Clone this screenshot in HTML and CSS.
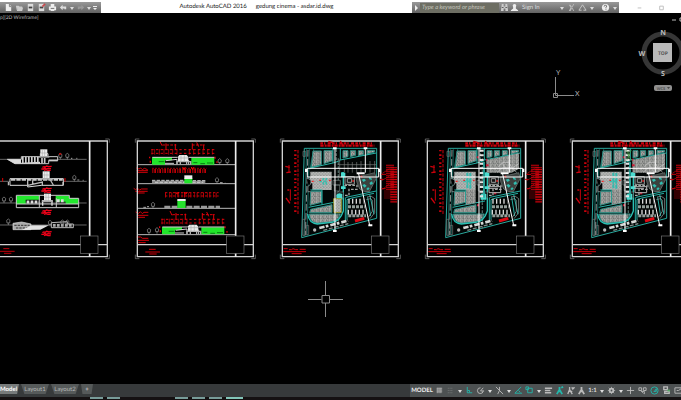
FILE: index.html
```html
<!DOCTYPE html>
<html lang="en">
<head>
<meta charset="utf-8">
<title>Autodesk AutoCAD 2016 - gedung cinema - asdar.id.dwg</title>
<link rel="stylesheet" href="styles.css">
</head>
<body>
<svg class="defs" aria-hidden="true">
  <defs>
    <pattern id="stipple" width="13" height="11" patternUnits="userSpaceOnUse"><rect width="13" height="11" fill="#949694"/><path d="M1 1h2v2h3M8 1l3 3M2 7l3 2M9 7h3v2" stroke="#3c403e" stroke-width="1.5" fill="none"/><path d="M5 1l1 1M1 5h2M7 5h2v2M11 1v1M6 9h2" stroke="#deddda" stroke-width="2" fill="none"/></pattern>
    <pattern id="paving" width="9" height="9" patternUnits="userSpaceOnUse"><rect width="9" height="9" fill="#b6b8b6"/><path d="M0 2h5M6 6h3M2 7h2" stroke="#7c807d" stroke-width="2"/></pattern>

    <g id="frame">
      <path d="M22 33H370V380H22ZM22 344H370" fill="none" stroke="#d2d2d2" stroke-width="4"/>
      <path d="M317 33V380" stroke="#eee" stroke-width="5"/>
      <rect x="290" y="318" width="52" height="52" fill="#000" stroke="#777" stroke-width="2"/>
      <path d="M16 38V27H28M364 27H376V38M16 374V386H28M364 386H376V374" fill="none" stroke="#888" stroke-width="2"/>
    </g>

    <g id="tree" fill="none" stroke="#999" stroke-width="2"><path d="M0 0V-7M-4-6Q-8-16 0-18Q8-16 4-6Z"/></g>

    <g id="tower"><path d="M-10 0V-23H11V0Z" fill="#eee"/><path d="M-4-22V0M3-22V0M-10-12H11" stroke="#999" stroke-width="1.5"/><path d="M-17 2V-3H17V2Z" fill="#aaa"/></g>

    <g id="caption" stroke="#f00018" stroke-width="4" fill="none"><path d="M-14-3l5-2 4 1 4-3 6 2 9-1M-17 2h7l3-3 5 3 5-2 9 1M-9 6l6-2 6 2h8"/></g>

    <g id="dims" fill="none" stroke="#cc000b">
      <path d="M136 40H298" stroke-width="7" stroke-dasharray="8 3 4 7 9 4"/>
      <path d="M136 47H298" stroke-width="7" stroke-dasharray="10 3 6 2"/>
      <path d="M160 34l14 4M196 33l8 12" stroke-width="4"/>
      <path d="M61 60V252" stroke-width="7" stroke-dasharray="4 9 5 6"/>
      <path d="M69 60V252" stroke-width="3" stroke-dasharray="10 4"/>
      <path d="M42 105V128M46 178V212" stroke-width="3"/>
      <path d="M31 109l13 3M34 128l13-2M37 180h6M33 204l12 16" stroke-width="4"/>
      <path d="M319 133h14M315 148h10M320 176h12" stroke-width="3"/>
      <path d="M322 130l22-14M321 151l22-12M323 178l20-16" stroke-width="2"/>
      <path d="M345 104V182" stroke-width="24" stroke-dasharray="3 3"/>
      <path d="M356 112V218" stroke-width="20" stroke-dasharray="3 2"/>
      <path d="M338 182V207" stroke-width="22" stroke-dasharray="2 4"/>
      <path d="M26 356h12M42 359h8l4-3 8 3h7M74 358h18M25 365h68M50 371h30" stroke-width="3"/>
    </g>

    <g id="site">
      <path d="M88 55H305V265L80 323Z" fill="#020706" stroke="#2aa99e" stroke-width="3"/>
      <path d="M95 58L87 318M103 58L96 317M116 58L105 118" fill="none" stroke="#229a90" stroke-width="2"/>
      <path d="M99 60L91 316" stroke="#8a8f8e" stroke-width="3" stroke-dasharray="20 7"/>
      <path d="M84 64h8v15h-8zM83 268h7v48h-7zM94 286h7v28h-7z" fill="none" stroke="#777" stroke-width="2"/>
      <g fill="url(#stipple)" stroke="#2a8c82" stroke-width="3">
        <path d="M114 63H139V104L109 112Z"/><path d="M147 62H172V92L147 101Z"/>
        <path d="M204 62H219V80L204 84ZM226 62H242V76L226 80ZM250 62H265V74L250 77ZM276 61H299V66L276 73Z"/>
        <path d="M107 184H140V217L105 226Z"/><path d="M107 238L171 224V248H104Z"/>
        <path d="M103 252H196Q189 274 169 276L126 280Q104 277 103 252Z"/>
      </g>
      <path d="M106 125H170V180H112V160H104V142H106Z" fill="url(#paving)"/>
      <path d="M106 114L174 99V55M196 55V90L304 69M174 99L196 92M106 180H141V224M101 232L198 213" fill="none" stroke="#28b3a6" stroke-width="3"/>
      <path d="M184 58V90M190 85V300" stroke="#4b6661" stroke-width="4" stroke-dasharray="8 4"/>
      <path d="M199 128H205V243Q195 275 170 277L127 282Q102 280 98 252" fill="none" stroke="#2bc2b5" stroke-width="4"/>
      <path d="M174 151h22v14h-22zM178 165h16v18h-16zM186 186h19v18h-19z" fill="#070c0b" stroke="#748481" stroke-width="2"/>
      <path d="M210 140H238V163H210ZM217 146H230V157H217Z" fill="#111" stroke="#9a9e9c" stroke-width="3"/>
      <path d="M184 195q5-9 18-3v17h-17zM198 128h13v14h-13zM198 169h14v8h-14z" fill="#4adbcf"/>
      <path d="M208 166H246V178H222V196H209" fill="none" stroke="#a5a9a7" stroke-width="4" stroke-dasharray="8 4"/>
      <path d="M243 142L299 128L304 145L283 185Q267 188 254 177L246 158Z" fill="#3b403e" stroke="#777f7d" stroke-width="2"/>
      <path d="M260 149l8-3 5 5-7 5zM281 141l8 2 2 7-8-2zM262 166l6-4 7 5-6 6zM283 159l8-5 3 7-7 4zM274 177l5-5 5 3-5 6z" fill="#30bdb0"/>
      <path d="M213 202L304 183M211 276V202M216 269V209L231 204M231 204L297 190M284 193L297 253M278 202L287 258" fill="none" stroke="#26ada2" stroke-width="3"/>
      <path d="M220 214h45M218 247h51" stroke="#dadada" stroke-width="15" stroke-dasharray="4 7"/>
      <path d="M219 230h50M220 257h53" stroke="#929d99" stroke-width="9" stroke-dasharray="9 3"/>
      <path d="M276 201L289 199L299 206V248L285 266M274 209L286 206L292 211V244L280 262" fill="none" stroke="#a3a6a4" stroke-width="2"/>
      <path d="M240 273L268 265" stroke="#e00812" stroke-width="9"/>
      <path d="M133 294L219 272" stroke="#d4d7d5" stroke-width="8" stroke-dasharray="16 4 8 6"/>
      <path d="M145 301L220 281" stroke="#81908c" stroke-width="4" stroke-dasharray="12 5"/>
      <circle cx="119" cy="300" r="5" fill="#bbb"/><path d="M133 154h22M145 143v27M154 143v26" stroke="#3bbdad" stroke-width="5" stroke-dasharray="8 5"/>
      <path d="M110 154h6M133 151h5M162 151h5M257 137l5 5M232 153h5" stroke="#f12626" stroke-width="4"/>
      <path d="M95 146q13 0 13 10t-9 13v16h8" fill="#000" stroke="#9aa" stroke-width="2"/>
    </g>
    <g id="sections" fill="none" stroke="#fff" stroke-width="3">
      <path d="M97 115H311V141H97ZM180 55V305M271 55V128M251 132L284 286"/>
      <path d="M174 55h11M266 55h11M174 303h11M280 286h12M93 116v10M313 116v10M245 130h24" stroke-width="6"/>
    </g>
    <g id="dense">
      <path d="M202 90L300 70V116L278 128H203Z" fill="url(#stipple)"/>
      <path d="M141 179H170V219L141 224Z" fill="url(#stipple)"/>
      <path d="M238 111l13-14h17l12 17 18-12M235 127l15-14h28l15 14M249 98l17 28" fill="none" stroke="#c8c8c8" stroke-width="2"/>
      <path d="M145 128V180M154 129V180" stroke="#35b9ae" stroke-width="6" stroke-dasharray="11 7"/>
      <path d="M188 59V96M188 98V205" stroke="#e5e5e5" stroke-width="12" stroke-dasharray="6 8"/>
      <path d="M195 95V203" stroke="#28ada2" stroke-width="5"/>
      <path d="M173 82h6M201 106h8M225 190h7M174 226h6M201 89h4" stroke="#c51e37" stroke-width="6"/>
      <path d="M207 170H245V188H210V175H237" fill="none" stroke="#b9b9b9" stroke-width="3"/>
    </g>

    <g id="wing">
      <path d="M66 82H126V91H105V104H66ZM184 83H253V104H184Z" fill="#21e62a"/>
      <path d="M67 82H143M176 82H253M107 92L141 88V103M176 90V103M105 100H132" fill="none" stroke="#d5d5d5" stroke-width="3"/>
      <path d="M86 95h17M190 98h12M211 101h14M231 99h18" stroke="#087c12" stroke-width="3"/>
      <path d="M144 80l4-5h22l5 6v14h-31z" fill="#e9e9e9"/><path d="M153 76v19M163 76v19M144 84h31" stroke="#aaa" stroke-width="2"/>
      <path d="M141 103v-8h41v8M151 103v-7M170 103v-7" fill="none" stroke="#b1b1b1" stroke-width="4"/>
    </g>
    <g id="wingdims" fill="none" stroke="#e0000a">
      <path d="M66 57V74M74 57V74M88 57V74M102 57V74M116 57V74M128 57V74M141 57V74M178 57V74M191 57V74M205 57V74M219 57V74M233 57V74M247 57V74" stroke-width="2"/>
      <path d="M64 59H254M64 70H254" stroke-width="3" stroke-dasharray="7 7"/>
      <path d="M97 45H139M186 45H224" stroke-width="3" stroke-dasharray="8 4"/><path d="M108 40V59M136 42V59M187 40V59M221 43V59M90 34l6 13M200 37l6 13" stroke-width="3"/>
      <path d="M59 80v5M61 92v6M255 80v6M261 94v5" stroke-width="4"/>
    </g>

    <symbol id="i-down" viewBox="0 0 8 8"><path d="M2 3h4L4 6z" fill="currentColor"/></symbol>
    <symbol id="i-user" viewBox="0 0 10 10"><circle cx="5" cy="3" r="2"/><path d="M3.5 4h3v2L9 8v1H1V8l2.500-2z"/></symbol>
  </defs>
</svg>

<header class="titlebar">
  <div class="quick" role="toolbar" aria-label="Quick access">
    <button aria-label="New"><svg viewBox="0 0 10 10"><path d="M2 1h4l2 3v5H2z" fill="#eee"/><path d="M6 1v3h2" fill="none" stroke="#777"/></svg></button>
    <button aria-label="Open"><svg viewBox="0 0 10 10"><path d="M1 3h3l1 1h3v1H3L2 8zM3 5h6L8 9H2z" fill="#ccc"/></svg></button>
    <button aria-label="Save"><svg viewBox="0 0 10 10"><path d="M2 1h6v8H2z" fill="#ddd"/><path d="M3 4h4v2H3z" fill="#444"/></svg></button>
    <button aria-label="Save as"><svg viewBox="0 0 10 10"><path d="M2 1h6v8H2z" fill="#ddd"/><path d="M3 4h4v2H3z" fill="#444"/><path d="M6 4l3-3" stroke="#c6494d" stroke-width="2"/></svg></button>
    <button aria-label="Plot"><svg viewBox="0 0 10 10"><path d="M3 1h4v3h2v4H7v1H3V8H1V4h2z" fill="#eee"/><path d="M3 6h4" stroke="#666"/></svg></button>
    <button aria-label="Undo"><svg viewBox="0 0 10 10"><path d="M1 5l3-3v2h4v3H6V6H4v2z" fill="#ddd"/></svg></button>
    <button class="drop" aria-label="Undo list"><svg><use href="#i-down"/></svg></button>
    <button aria-label="Redo"><svg viewBox="0 0 10 10"><path d="M9 5L6 2v2H2v3h2V6h2v2z" fill="#999"/></svg></button>
    <button class="drop" aria-label="Redo list"><svg><use href="#i-down"/></svg></button>
    <button class="drop" aria-label="Customize"><svg viewBox="0 0 8 8"><path d="M2 2h4v1H2zM2 4h4L4 6z" fill="#eee"/></svg></button>
  </div>
  <h1 class="title"><span>Autodesk AutoCAD 2016</span><span>gedung cinema - asdar.id.dwg</span></h1>
  <div class="info" role="toolbar" aria-label="Help and account">
    <button class="drop" aria-label="Collapse search"><svg viewBox="0 0 8 8"><path d="M3 1l3 3-3 3z" fill="#eee"/></svg></button>
    <input type="search" aria-label="Search help" placeholder="Type a keyword or phrase">
    <button aria-label="Search"><svg viewBox="0 0 10 10"><path d="M2 1h2v3h2V1h2l1 8H6V6H4v3H1z" fill="#ccc"/><path d="M2 5h2M6 5h2" stroke="#555"/></svg></button>
    <button class="signin"><svg fill="#eee"><use href="#i-user"/></svg><span>Sign In</span></button>
    <button class="drop" aria-label="Account list"><svg><use href="#i-down"/></svg></button>
    <button aria-label="Exchange"><svg viewBox="0 0 10 10"><path d="M2 2h2l2 3-2 4H2l2-4zM8 1H7L5 5l2 4h1L6 5z" fill="#bbb"/></svg></button>
    <button aria-label="Autodesk 360"><svg viewBox="0 0 10 10"><path d="M5 2L1 8h3M5 2l4 6H6" fill="none" stroke="#ccc"/></svg></button>
    <button class="drop" aria-label="Autodesk 360 list"><svg><use href="#i-down"/></svg></button>
    <button class="help" aria-label="Help"><svg viewBox="0 0 10 10"><circle cx="5" cy="5" r="4" fill="#eee"/><path d="M3.500 4q0-2 2-1.500t0 2.500v1M5.500 7v1" fill="none" stroke="#666"/></svg></button>
    <button class="drop" aria-label="Help list"><svg><use href="#i-down"/></svg></button>
  </div>
  <div class="window">
    <button aria-label="Minimize"><svg viewBox="0 0 10 10"><path d="M3 5.500h4" stroke="#bbb"/></svg></button>
    <button aria-label="Restore"><svg viewBox="0 0 10 10"><path d="M3 3.500h4v4H3z" fill="none" stroke="#bbb"/></svg></button>
  </div>
</header>

<main class="model">
  <svg class="drawing" role="img" aria-label="Cinema building sheets: elevations, sections and site plans">
    <g transform="translate(-16 117) scale(.3333)"><use href="#frame"/></g>
    <g transform="translate(0 117) scale(.3333)">
      <path d="M0 88H260M0 154H260M0 219H260M0 285H260" stroke="#999" stroke-width="2"/>
      <path d="M22 88H64V80H121V71H144V80H173V92H146V101H45Z" fill="#000" stroke="#ccc" stroke-width="3"/><path d="M22 88H63V98L120 95V101H44Z" fill="#ddd"/>
      <path d="M66 86H119M66 94H119" stroke="#d0d0d0" stroke-width="11" stroke-dasharray="5 4"/>
      <use href="#tower" x="131" y="81"/><path d="M126 84v16M134 84v16M146 91h27" stroke="#ccc" stroke-width="5"/>
      <use href="#tree" x="181" y="88"/><use href="#tree" x="202" y="88"/><path d="M213 85h4M229 85h3" stroke="#aaa" stroke-width="3"/><path d="M177 72h7" stroke="#d00" stroke-width="4"/>
      <use href="#caption" x="141" y="115"/>
      <path d="M30 146H190V166H125L83 171V166H30Z" fill="#000" stroke="#ddd" stroke-width="3"/><path d="M33 149H188" stroke="#ccc" stroke-width="6" stroke-dasharray="13 3"/><path d="M83 150V166L127 156V168M98 151V162M151 150L160 165" fill="none" stroke="#bbb" stroke-width="4"/>
      <use href="#tower" x="138" y="147"/><use href="#tree" x="223" y="154"/><path d="M25 156v10M189 156v10" stroke="#ddd" stroke-width="3"/><path d="M8 144v11M195 144v11" stroke="#d00" stroke-width="3"/><path d="M232 150h6M248 151h3" stroke="#999" stroke-width="3"/>
      <use href="#caption" x="141" y="181"/>
      <path d="M48 197H118V209H77V222H48ZM167 197H207V204H235V222H197V215H167Z" fill="#23e72e"/><path d="M49 196H208V205H236V233H49ZM49 222H236M118 196V232M169 205V232" fill="none" stroke="#ccc" stroke-width="3"/>
      <path d="M80 216h37M171 212h24" stroke="#ddd" stroke-width="9" stroke-dasharray="8 4"/><path d="M128 227v-15h28v15" fill="none" stroke="#ddd" stroke-width="4"/><use href="#tower" x="142" y="214"/>
      <use href="#tree" x="12" y="219"/><use href="#tree" x="33" y="219"/><use href="#caption" x="141" y="247"/>
      <path d="M39 280L65 276 93 282V299H39Z" fill="#aaa" stroke="#ddd" stroke-width="2"/><path d="M43 286h46M48 294h36" stroke="#333" stroke-width="3" stroke-dasharray="7 3"/><path d="M65 300L95 286H147L121 299Z" fill="#e2e2e2"/>
      <path d="M154 278L202 275 202 282H220V293H154Z" fill="#111" stroke="#bbb" stroke-width="3"/><path d="M159 286H218" stroke="#aaa" stroke-width="8" stroke-dasharray="8 4"/>
      <use href="#tree" x="25" y="285"/><use href="#tree" x="150" y="289"/><use href="#tree" x="187" y="288"/><use href="#tree" x="202" y="288"/><use href="#caption" x="141" y="311"/>
      <path d="M10 356h18M0 364h44M12 370h22" stroke="#c00009" stroke-width="3"/>
    </g>
    <g transform="translate(130 117) scale(.3333)">
      <path d="M22 104H315M22 161H315M22 235H315M22 314H315" stroke="#bbb" stroke-width="3"/>
      <use href="#wingdims"/><use href="#wing"/><use href="#tree" x="269" y="104"/><use href="#tree" x="292" y="104"/>
      <path d="M67 115H230" stroke="#e00008" stroke-width="3" stroke-dasharray="4 5"/><path d="M67 123H230" stroke="#c00007" stroke-width="12" stroke-dasharray="3 3 5 4"/><path d="M158 111l4 8 4-8M184 111l4 8 4-8" fill="none" stroke="#f00" stroke-width="3"/>
      <path d="M66 152H226V160H66Z" fill="#888"/><path d="M66 151H163M188 152H226M75 157H220" stroke="#ccc" stroke-width="3" stroke-dasharray="10 4"/><path d="M163 144H187V160H163Z" fill="#23e42c"/><path d="M163 136H187V147H163Z" fill="#eee"/><use href="#tree" x="261" y="161"/><path d="M270 158h8M284 160h3" stroke="#aaa" stroke-width="3"/>
      <path d="M105 188H266M105 198H266" stroke="#d00008" stroke-width="3" stroke-dasharray="7 5"/><path d="M105 195H266" stroke="#b80007" stroke-width="15" stroke-dasharray="3 9 2 5"/><path d="M137 186l5 7 5-7M162 186l5 7 5-7" fill="none" stroke="#f00" stroke-width="3"/>
      <path d="M103 231H270" stroke="#999" stroke-width="8" stroke-dasharray="18 4"/><path d="M142 211H167V234H142Z" fill="#26e22d"/><path d="M142 207H167V213H142Z" fill="#eee"/><use href="#tree" x="69" y="235"/><path d="M40 232h8M51 230h6" stroke="#aaa" stroke-width="3"/>
      <g transform="translate(30 209)"><use href="#wingdims"/><use href="#wing"/></g><use href="#tree" x="57" y="313"/><use href="#tree" x="81" y="311"/>
      <g fill="none" stroke="#d40009" stroke-width="3"><path d="M19 114l8 3 5-3 5 5 6-4 10 4M20 122h34M22 127h31M11 175l6 4 5-4 7 5 5-3h19M16 184h37M22 189h22M17 246l9 4 5-5 6 6 5-4h13M21 256h34M25 262h20M20 321h12l5 4h18M22 331h35M25 338h22M57 358h20M46 366h44M58 372h22"/></g>
      <use href="#frame"/>
    </g>
    <g transform="translate(275 117) scale(.3333)">
      <use href="#frame"/><use href="#site"/><path d="M188 104H304M194 88V139M208 88V128M219 96V128M232 96V128M245 96V128M258 93V128M285 93V128M299 93V128" fill="none" stroke="#7a7d7b" stroke-width="2"/><path d="M176 206H199V248H177Z" fill="url(#paving)" stroke="#9a982b" stroke-width="3"/><use href="#sections"/><use href="#dims"/>
    </g>
    <g transform="translate(420 117) scale(.3333)"><use href="#frame"/><g transform="translate(-3 0)"><use href="#site"/><use href="#dense"/><use href="#sections"/></g><use href="#dims"/></g>
    <g transform="translate(565 117) scale(.3333)"><use href="#frame"/><use href="#site"/><use href="#dense"/><path d="M183 60l15 31M199 60l-14 31M190 63v22" stroke="#48a34b" stroke-width="2"/><use href="#sections"/><use href="#dims"/></g>

    <g class="ucs"><path d="M555.500 64V82.500H574M553.500 80.500h4v4h-4z"/><text x="556" y="62">Y</text><text x="575" y="83">X</text></g>
    <path class="cursor" d="M325.500 268V282M325.500 290V304M308 286.500H321.500M329.500 286.500H343M322 282.500H329.500V290H322Z"/>
  </svg>
  <p class="viewlabel">p][2D Wireframe]</p>
  <svg class="cube" viewBox="0 0 48 84" role="img" aria-label="View cube, top">
    <circle cx="30" cy="40" r="19" fill="none" stroke="#363636" stroke-width="5"/>
    <rect class="face" x="20" y="30" width="19" height="19"/>
    <text x="30" y="22">N</text><text x="30" y="63">S</text><text x="9" y="43">W</text><text class="top" x="30" y="42">TOP</text>
    <rect class="pill" x="21" y="72" width="18" height="6" rx="2"/><text class="wcs" x="28" y="77">WCS</text><path d="M34 74h3l-1.500 2z" fill="#444"/>
    <path d="M39 7h4M47 5h3v3h-3z" fill="none" stroke="#bbb"/>
  </svg>
</main>

<footer class="status">
  <nav class="tabs" aria-label="Layouts">
    <button class="tab active"><span>Model</span></button>
    <button class="tab"><span>Layout1</span></button>
    <button class="tab"><span>Layout2</span></button>
    <button class="tab add" aria-label="New layout"><span>+</span></button>
  </nav>
  <div class="tools" role="toolbar" aria-label="Drafting settings">
    <button class="space">MODEL</button>
    <button aria-label="Grid"><svg viewBox="0 0 10 10"><path d="M2 2.500h6M2 4.500h6M2 6.500h6M2.500 2v6M4.500 2v6M6.500 2v6" stroke="#aaa"/></svg></button>
    <button aria-label="Snap"><svg viewBox="0 0 10 10"><path d="M2 2.500h6M2 5h6M2 7.500h6" stroke="#7b7e7e" stroke-dasharray="1 1"/></svg></button>
    <button class="drop" aria-label="Snap list"><svg><use href="#i-down"/></svg></button>
    <button class="on" aria-label="Ortho"><svg viewBox="0 0 10 10"><path d="M2.500 1v6.500H8M3 5h2v2"/></svg></button>
    <button aria-label="Polar"><svg viewBox="0 0 10 10"><path d="M8 5.500A3.200 3.200 0 1 1 5 2M5 5.500h4M5 5.500L8 2"/></svg></button>
    <button class="drop" aria-label="Polar list"><svg><use href="#i-down"/></svg></button>
    <button aria-label="Isodraft"><svg viewBox="0 0 10 10"><path d="M1 1l8 8M5 5V1M5 5L3 9"/></svg></button>
    <button class="drop" aria-label="Isodraft list"><svg><use href="#i-down"/></svg></button>
    <button class="on" aria-label="Object tracking"><svg viewBox="0 0 10 10"><path d="M8 1L1 8h8M5 5l2 2"/></svg></button>
    <button class="on" aria-label="Object snap"><svg viewBox="0 0 10 10"><path d="M3 2.500h5v5H3z"/><path d="M1 1h3v3H1z"/></svg></button>
    <button class="drop" aria-label="Object snap list"><svg><use href="#i-down"/></svg></button>
    <button aria-label="Lineweight"><svg viewBox="0 0 10 10"><path d="M1 2.500h8M1 5h6M1 7.500h7" stroke-width="1.500"/></svg></button>
    <button class="on" aria-label="Annotation visibility"><svg viewBox="0 0 10 10"><path d="M5 1v3L2 9M5 4l3 5M3 6h4M7 2l2-1" stroke-width="2"/></svg></button>
    <button aria-label="Autoscale"><svg viewBox="0 0 10 10"><path d="M4 1v3L2 9M4 4l3 5M3 6h4M6 2h3L7 4" stroke-width="1.500"/></svg></button>
    <button aria-label="Annotation scale"><svg viewBox="0 0 10 10"><path d="M5 1v3L2 9M5 4l3 5M3 6h4" stroke-width="2"/></svg></button>
    <button class="scale">1:1</button>
    <button class="drop" aria-label="Scale list"><svg><use href="#i-down"/></svg></button>
    <button aria-label="Workspace"><svg viewBox="0 0 10 10"><circle cx="5" cy="5" r="2" stroke-width="2"/><path d="M5 1v1M5 8v1M1 5h1M8 5h1M2 2l1 1M7 7l1 1M8 2L7 3M3 7L2 8"/></svg></button>
    <button class="drop" aria-label="Workspace list"><svg><use href="#i-down"/></svg></button>
    <button aria-label="Annotation monitor"><svg viewBox="0 0 10 10"><path d="M5 1v8M1 5h8"/></svg></button>
    <button class="wide" aria-label="Isolate objects"><svg viewBox="0 0 10 10"><path d="M1 2h3v3H1zM6 2h3v3H6zM4 6h3v3M3 5l3 3"/></svg></button>
    <button class="wide on" aria-label="Hardware acceleration"><svg viewBox="0 0 10 10"><circle cx="5" cy="5" r="4"/><path d="M4 6h3V3L5 6"/></svg></button>
    <button class="wide" aria-label="Clean screen"><svg viewBox="0 0 10 10"><path d="M2 1h4v3H2zM3 6h5v2H3z" stroke-width="1.500"/><path d="M6 4h3v2H6z" fill="#59a568" stroke="none"/></svg></button>
    <button class="wide" aria-label="Customization"><svg viewBox="0 0 10 10"><path d="M1 2h8v6H1zM3 5h2M5 5l3-2"/></svg></button>
  </div>
</footer>
<div class="taskbar"><i></i><i></i><i class="far"></i><i></i><i></i><i class="current"></i></div>
</body>
</html>
```
FILE: styles.css
```css
* { box-sizing: border-box; }
body {
  margin: 0;
  height: 100vh;
  display: grid;
  grid-template-rows: 13px minmax(0, 1fr) 13px 3px;
  grid-template-columns: minmax(0, 1fr);
  overflow: hidden;
  background: #000;
  font-family: Lato, "Open Sans", sans-serif;
  text-rendering: geometricPrecision;
}
.defs { position: absolute; width: 0; height: 0; }
button {
  flex: none;
  display: flex;
  align-items: center;
  justify-content: center;
  width: 11px;
  height: 11px;
  padding: 0;
  border: 0;
  background: none;
  color: #ddd;
  font: inherit;
  text-rendering: inherit;
}
button svg { display: block; flex: none; width: 9px; height: 9px; }
button.drop { width: 8px; }
button.drop svg { width: 8px; height: 8px; }

.titlebar {
  display: grid;
  grid-template-columns: 101px minmax(0, 1fr) 207px 62px;
  align-items: end;
  background: #fff;
}
.quick, .info {
  display: flex;
  align-items: center;
  height: 11px;
  background: linear-gradient(#999, #626262);
}
.quick { padding-left: 3px; }
.quick button.drop { width: 6px; }
.title {
  display: flex;
  justify-content: center;
  gap: 9px;
  margin: 0;
  font-size: 6px;
  font-weight: 400;
  line-height: 13px;
  color: #222;
  white-space: nowrap;
}
.info input {
  width: 82px;
  height: 10px;
  padding: 0 2px;
  border: 0;
  background: #6d6e63;
  font: italic 6px Lato, sans-serif;
  text-rendering: inherit;
  color: #ddd;
}
.info input::placeholder { color: #c4c4bc; opacity: 1; }
.info .signin { width: 48px; gap: 3px; justify-content: flex-start; font-size: 6px; }
.info .help { margin-left: 4px; }
.window { display: flex; gap: 11px; padding-left: 15px; }

.model { position: relative; overflow: hidden; background: #000; }
.drawing { display: block; width: 100%; height: 100%; }
.ucs path, .cursor { fill: none; stroke: #8b8b8b; }
.ucs text { fill: #aaa; font-size: 7px; }
.viewlabel {
  position: absolute;
  top: 1px;
  left: 0;
  margin: 0;
  font-size: 5px;
  line-height: 9px;
  color: #bbb;
}
.cube { position: absolute; top: 0; right: 0; width: 48px; height: 84px; fill: #000; }
.cube text { fill: #bbb; font: 700 7px "Noto Sans", sans-serif; text-anchor: middle; }
.cube text.top { fill: #555; font-size: 5px; }
.cube text.wcs { fill: #555; font-size: 4px; }
.cube .face { fill: #b9b9b9; }
.cube .pill { fill: #909090; }

.status {
  display: flex;
  justify-content: space-between;
  overflow: hidden;
  background: #373a3b;
}
.tabs { display: flex; height: 10px; gap: 2px; }
.tab {
  width: 28px;
  height: 10px;
  background: #565a5a;
  color: #b4b6b6;
  font-size: 6px;
  clip-path: polygon(0 0, 100% 0, 88% 100%, 12% 100%);
}
.tab.active {
  width: 19px;
  justify-content: flex-start;
  background: #777b7b;
  color: #fff;
  font-weight: 700;
  clip-path: polygon(0 0, 100% 0, 90% 100%, 0 100%);
}
.tab.add { width: 12px; color: #ddd; }
.tools {
  display: flex;
  align-items: center;
  margin-right: -3px;
  background: #4d5152;
}
.tools svg { fill: none; stroke: #bbb; }
.tools .drop svg { stroke: none; }
.tools .on svg { stroke: #22b8ac; }
.tools .space { width: 24px; color: #eee; font-size: 6px; font-weight: 700; }
.tools .scale { font-size: 6px; font-weight: 700; }
.tools .wide { width: 12px; }
.taskbar { display: flex; gap: 4px; padding-left: 90px; background: #151112; }
.taskbar i { width: 13px; height: 2px; background: #779b98; }
.taskbar .far { margin-left: 51px; }
.taskbar .current { width: 17px; background: #82c5b8; }
```
